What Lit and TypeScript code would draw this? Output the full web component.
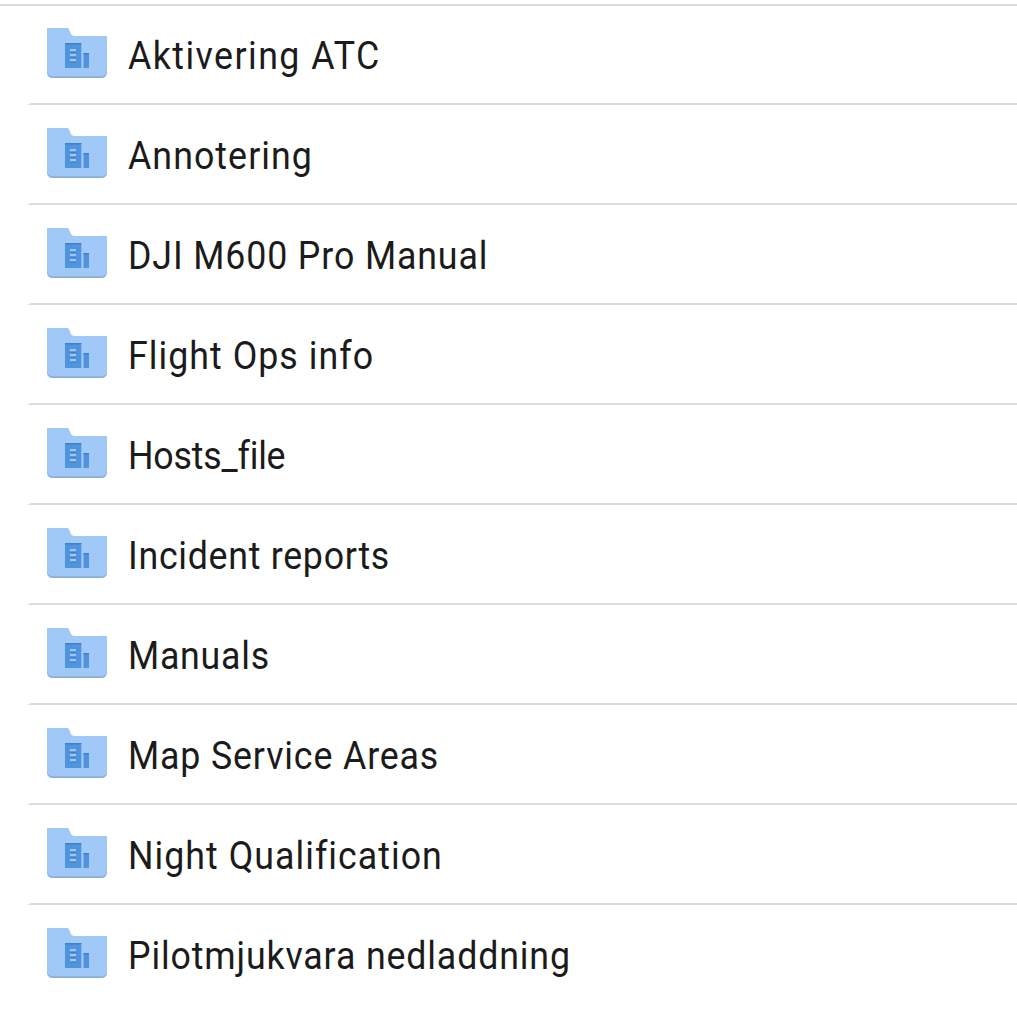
import { LitElement, html, css } from "lit";
import { customElement } from "lit/decorators.js";

interface Folder {
  name: string;
  tracking: number;
}

const FOLDERS: Folder[] = [
  { name: "Aktivering ATC", tracking: 1.54 },
  { name: "Annotering", tracking: 1.13 },
  { name: "DJI M600 Pro Manual", tracking: 0.93 },
  { name: "Flight Ops info", tracking: 1.1 },
  { name: "Hosts_file", tracking: -0.2 },
  { name: "Incident reports", tracking: 0.77 },
  { name: "Manuals", tracking: 0.8 },
  { name: "Map Service Areas", tracking: 0.92 },
  { name: "Night Qualification", tracking: 1.1 },
  { name: "Pilotmjukvara nedladdning", tracking: 0.92 },
];

@customElement("folder-icon")
export class FolderIcon extends LitElement {
  static styles = css`
    :host {
      display: block;
      flex: none;
      width: 60px;
      height: 50px;
    }
    .art {
      display: block;
    }
  `;

  render() {
    return html`
      <svg class="art" width="60" height="50" viewBox="0 0 60 50" aria-hidden="true">
        <path fill="#8eadd5" d="M0 10H60V44Q60 50 54 50H6Q0 50 0 44Z" />
        <path
          fill="#a1c9f7"
          d="M0 0H20.2Q21.6 0 22.1 1.4L23.4 5Q24.500 8 27 8H60V42.200Q60 48.200 54 48.200H6Q0 48.200 0 42.200Z"
        />
        <path fill="#5094e0" d="M18 15H34.300V40H18ZM36.500 25H42V40H36.500Z" />
        <path fill="#4580c3" d="M18 15H34.300V16.500H18ZM36.500 25H42V26.500H36.500Z" />
        <path fill="#a1c9f7" d="M23 21H29V23.500H23ZM23 26H29V28.500H23ZM23 31H29V33.500H23Z" />
        <path fill="#4580c3" d="M23 23.500H29V25H23ZM23 28.500H29V30H23ZM23 33.500H29V35H23Z" />
      </svg>
    `;
  }
}

@customElement("app-root")
export class AppRoot extends LitElement {
  static styles = css`
    :host {
      display: block;
      height: 1017px;
      overflow: hidden;
      background: #fff;
      color: #1b1b1b;
      font-family: Roboto, "Liberation Sans", sans-serif;
    }
    .rule {
      height: 2px;
      background: #dbdbdb;
    }
    .page {
      padding-top: 4px;
    }
    .list {
      list-style: none;
      margin: -1px 0 0;
      padding: 0 0 0 27px;
    }
    .row {
      display: flex;
      align-items: center;
      box-sizing: border-box;
      height: 100px;
      padding: 0 0 2px 16px;
      border-bottom: 2px solid #dbdbdb;
      border-left: 4px solid transparent;
    }
    .row:last-child {
      border-bottom-color: transparent;
    }
    .name {
      margin-left: 21px;
      padding-top: 6px;
      font-size: 38px;
      line-height: 46px;
      font-weight: 400;
      white-space: nowrap;
      transform: scaleX(0.94);
      transform-origin: 0 50%;
    }
  `;

  render() {
    return html`
      <main class="page">
        <div class="rule"></div>
        <ul class="list">
          ${FOLDERS.map(
            (f) => html`
              <li class="row">
                <folder-icon></folder-icon>
                <span class="name" style="letter-spacing:${f.tracking}px">${f.name}</span>
              </li>
            `,
          )}
        </ul>
      </main>
    `;
  }
}
